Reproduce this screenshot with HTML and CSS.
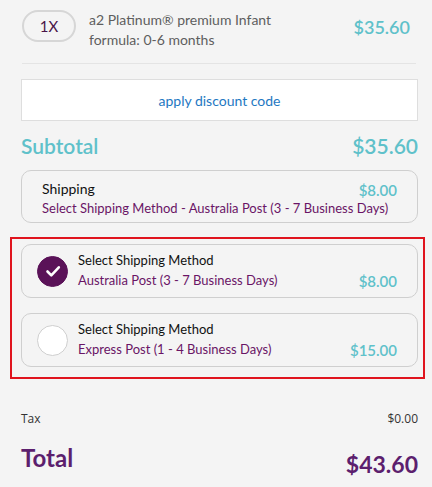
FILE: index.html
```html
<!DOCTYPE html>
<html lang="en">
<head>
  <meta charset="UTF-8">
  <title>Cart Summary</title>
  <meta name="viewport" content="width=device-width, initial-scale=1.0">
  <link rel="stylesheet" href="styles.css">
</head>
<body>

  <div class="summary">
    <!-- item -->
    <div class="item">
      <div class="qty">1X</div>
      <div class="item-name">a2 Platinum® premium Infant<br>formula: 0-6 months</div>
      <div class="item-price">$35.60</div>
    </div>

    <div class="discount">apply discount code</div>

    <div class="subtotal">
      <span>Subtotal</span>
      <span>$35.60</span>
    </div>

    <div class="shipping">
      <div class="ship-top">
        <span class="ship-title">Shipping</span>
        <span class="ship-price">$8.00</span>
      </div>
      <div class="ship-desc">Select Shipping Method - Australia Post (3 - 7 Business Days)</div>
    </div>

    <!-- shipping options -->
    <div class="options">
      <div class="option">
        <div class="radio checked">
          <svg viewBox="0 0 24 24"><path d="M6.5 12.5l3.8 3.8 7.5-8" fill="none" stroke="#fff" stroke-width="2.6" stroke-linecap="round" stroke-linejoin="round"/></svg>
        </div>
        <div class="opt-text">
          <div class="opt-title">Select Shipping Method</div>
          <div class="opt-name">Australia Post (3 - 7 Business Days)</div>
        </div>
        <div class="opt-price">$8.00</div>
      </div>
      <div class="option">
        <div class="radio"></div>
        <div class="opt-text">
          <div class="opt-title">Select Shipping Method</div>
          <div class="opt-name">Express Post (1 - 4 Business Days)</div>
        </div>
        <div class="opt-price">$15.00</div>
      </div>
    </div>

    <div class="tax">
      <span>Tax</span>
      <span>$0.00</span>
    </div>

    <div class="total">
      <span class="total-label">Total</span>
      <span class="total-price">$43.60</span>
    </div>
  </div>

</body>
</html>
```

FILE: styles.css
```css
* { margin: 0; padding: 0; box-sizing: border-box; }
body {
  background: #f4f4f4;
  font-family: "Lato", "Open Sans", sans-serif;
  color: #222;
}

.summary { padding: 0 14px 0 21px; }

/* ITEM */
.item {
  display: flex;
  align-items: flex-start;
  padding: 10px 6px 13px 0;
  border-bottom: 1px solid #e4e4e4;
  margin-left: 1px;
  margin-right: 2px;
}
.qty {
  width: 54px;
  height: 32px;
  border: 2px solid #d6d6d6;
  border-radius: 16px;
  display: flex;
  justify-content: center;
  align-items: center;
  font-size: 15px;
  color: #4a1448;
  flex-shrink: 0;
}
.item-name { margin-left: 13px; font-size: 14px; line-height: 20px; color: #5e5e5e; flex: 1; }
.item-price { font-size: 18px; color: #5fc1ca; font-weight: 600; margin-top: 6px; }

.discount {
  margin-top: 15px;
  height: 42px;
  background: #fff;
  border: 1px solid #dedede;
  display: flex;
  justify-content: center;
  align-items: center;
  font-size: 14px;
  color: #1e78c2;
}

.subtotal {
  display: flex;
  justify-content: space-between;
  align-items: center;
  height: 49px;
  color: #5fc1ca;
  font-size: 21px;
  font-weight: 600;
}

.shipping {
  height: 53px;
  border: 1px solid #cfcfcf;
  border-radius: 10px;
  padding: 6px 20px 0 20px;
}
.ship-top { display: flex; justify-content: space-between; align-items: center; }
.ship-title { font-size: 14px; color: #111; }
.ship-price { font-size: 15px; color: #5fc1ca; font-weight: 600; margin-top: 4px; }
.ship-desc { font-size: 13px; color: #6a1466; margin-top: 1px; }

/* shipping options highlight */
.options {
  margin: 14px -7px 0 -11px;
  border: 2px solid #e0141e;
  padding: 5px 5px 10px 9px;
  display: flex;
  flex-direction: column;
  gap: 15px;
}
.option {
  height: 54px;
  border: 1px solid #cfcfcf;
  border-radius: 10px;
  display: flex;
  align-items: center;
  padding: 0 20px 0 15px;
}
.radio {
  width: 31px;
  height: 31px;
  border-radius: 50%;
  background: #fff;
  border: 1px solid #cfcfcf;
  flex-shrink: 0;
}
.radio.checked { background: #5a1258; border-color: #5a1258; display: flex; justify-content: center; align-items: center; }
.radio svg { width: 24px; height: 24px; }
.opt-text { margin-left: 10px; flex: 1; margin-top: -2px; }
.opt-title { font-size: 13px; color: #111; line-height: 20px; }
.opt-name { font-size: 13px; color: #6a1466; line-height: 20px; }
.opt-price { font-size: 15px; color: #5fc1ca; font-weight: 600; margin-top: 20px; }

.tax {
  display: flex;
  justify-content: space-between;
  margin-top: 31px;
  font-family: "Open Sans", sans-serif;
  font-size: 12px;
  color: #333;
}

.total {
  display: flex;
  justify-content: space-between;
  align-items: center;
  margin-top: 18px;
  color: #5c1f6e;
  font-weight: 700;
}
.total-label { font-size: 24px; margin-top: -8px; }
.total-price { font-size: 23px; margin-top: 5px; }
```
